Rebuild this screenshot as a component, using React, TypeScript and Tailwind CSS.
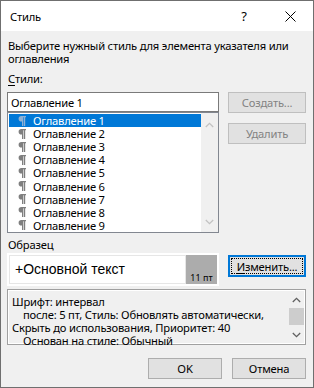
import React from "react";

function ChevUp({ color }: { color: string }) {
  return (
    <svg width="9" height="6" viewBox="0 0 9 6">
      <path d="M0.8 5 L4.5 1.3 L8.2 5" fill="none" stroke={color} strokeWidth="1.3" />
    </svg>
  );
}
function ChevDown({ color }: { color: string }) {
  return (
    <svg width="9" height="6" viewBox="0 0 9 6">
      <path d="M0.8 1 L4.5 4.7 L8.2 1" fill="none" stroke={color} strokeWidth="1.3" />
    </svg>
  );
}
function Pilcrow({ color }: { color: string }) {
  return (
    <svg width="8" height="10" viewBox="0 0 8 10">
      <path
        d="M3.4 0 H8 V1.3 H7.2 V10 H5.9 V1.3 H5.3 V10 H4 V5.6 H3.4 A2.8 2.8 0 0 1 3.4 0 Z"
        fill={color}
      />
    </svg>
  );
}

export default function App() {
  const items = Array.from({ length: 9 }, (_, i) => `Оглавление ${i + 1}`);
  return (
    <div className="w-[314px] h-[388px] border border-[#6f6f6f] bg-[#f0f0f0] flex flex-col text-[11.2px] tracking-[-0.2px] text-black font-['Noto_Sans',sans-serif] leading-[13px] overflow-hidden">
      {/* title bar */}
      <div className="h-[30px] bg-white flex items-center shrink-0">
        <div className="ml-[9px] flex-1">Стиль</div>
        <div className="w-[46px] h-full flex items-center justify-center text-[13px]">?</div>
        <div className="w-[46px] h-full flex items-center justify-center">
          <svg width="11" height="11" viewBox="0 0 11 11">
            <path d="M0.5 0.5 L10.5 10.5 M10.5 0.5 L0.5 10.5" stroke="#000" strokeWidth="1" />
          </svg>
        </div>
      </div>

      {/* body */}
      <div className="flex-1 flex flex-col pl-[6px] pr-[7px]">
        <div className="pt-[8px] pl-[1px]">
          <div className="whitespace-nowrap">Выберите нужный стиль для элемента указателя или</div>
          <div>оглавления</div>
        </div>
        <div className="mt-[7px] pl-[1px]">
          <span className="underline underline-offset-2">С</span>тили:
        </div>

        <div className="mt-[7px] flex gap-[9px]">
          <div className="w-[212px] flex flex-col">
            <div className="h-[20px] border border-[#7a7a7a] bg-white flex items-center pl-[3px]">
              Оглавление 1
            </div>
            <div className="h-[121px] border border-[#828790] bg-white flex">
              <div className="flex-1 flex flex-col pl-[1px] pt-[1px]">
                {items.map((t, i) => (
                  <div
                    key={t}
                    className={
                      i === 0
                        ? "h-[13.25px] flex items-center bg-[#0078d7] text-white"
                        : "h-[13.25px] flex items-center"
                    }
                  >
                    <span className="ml-[9px] w-[15px] flex items-center">
                      <Pilcrow color={i === 0 ? "#8fb0d3" : "#7f7f7f"} />
                    </span>
                    <span>{t}</span>
                  </div>
                ))}
              </div>
              <div className="w-[17px] bg-[#f0f0f0] flex flex-col items-center justify-between pt-[9px] pb-[7px]">
                <ChevUp color="#c2c2c2" />
                <ChevDown color="#c2c2c2" />
              </div>
            </div>
          </div>
          <div className="w-[78px] flex flex-col gap-[10px]">
            <div className="h-[21px] border border-[#bfbfbf] bg-[#e1e1e1] text-[#838383] flex items-center justify-center">
              Создать...
            </div>
            <div className="h-[21px] border border-[#bfbfbf] bg-[#e1e1e1] text-[#838383] flex items-center justify-center">
              Удалить
            </div>
          </div>
        </div>

        <div className="mt-[5px] pl-[1px]">Образец</div>

        <div className="mt-[2px] flex gap-[9px] items-start">
          <div className="w-[212px] h-[33px] bg-white p-[2px] flex">
            <div className="flex-1 border border-[#e6e6e6] flex items-center pl-[5px] text-[14px] tracking-normal font-['Liberation_Sans',sans-serif]">
              +Основной текст
            </div>
            <div className="w-[31px] bg-[#acacac] flex items-end justify-center pb-[1px] text-[9px] leading-[11px] tracking-normal">
              11 пт
            </div>
          </div>
          <div className="mt-[2px] w-[78px] h-[22px] border-2 border-[#0078d7] bg-[#e1e1e1] p-[1px]">
            <div className="w-full h-full border border-dotted border-black flex items-center justify-center">
              <span>
                <span className="underline underline-offset-2">И</span>зменить...
              </span>
            </div>
          </div>
        </div>

        <div className="mt-[3px] h-[56px] shrink-0 border border-[#a0a0a0] flex">
          <div className="flex-1 border border-white flex">
            <div className="flex-1 pl-[3px] pt-[4px] whitespace-nowrap">
              <div>Шрифт: интервал</div>
              <div className="pl-[11px]">после: 5 пт, Стиль: Обновлять автоматически,</div>
              <div>Скрыть до использования, Приоритет: 40</div>
              <div className="pl-[11px]">Основан на стиле: Обычный</div>
            </div>
            <div className="w-[16px] flex flex-col items-center">
              <div className="h-[17px] flex items-center justify-center">
                <ChevUp color="#606060" />
              </div>
              <div className="w-[15px] h-[17px] bg-[#cdcdcd]" />
              <div className="flex-1" />
              <div className="h-[17px] flex items-center justify-center">
                <ChevDown color="#606060" />
              </div>
            </div>
          </div>
        </div>

        <div className="mt-[13px] flex justify-end gap-[10px]">
          <div className="w-[74px] h-[21px] border border-[#adadad] bg-[#e1e1e1] flex items-center justify-center">
            OK
          </div>
          <div className="w-[74px] h-[21px] border border-[#adadad] bg-[#e1e1e1] flex items-center justify-center">
            Отмена
          </div>
        </div>
      </div>
    </div>
  );
}
